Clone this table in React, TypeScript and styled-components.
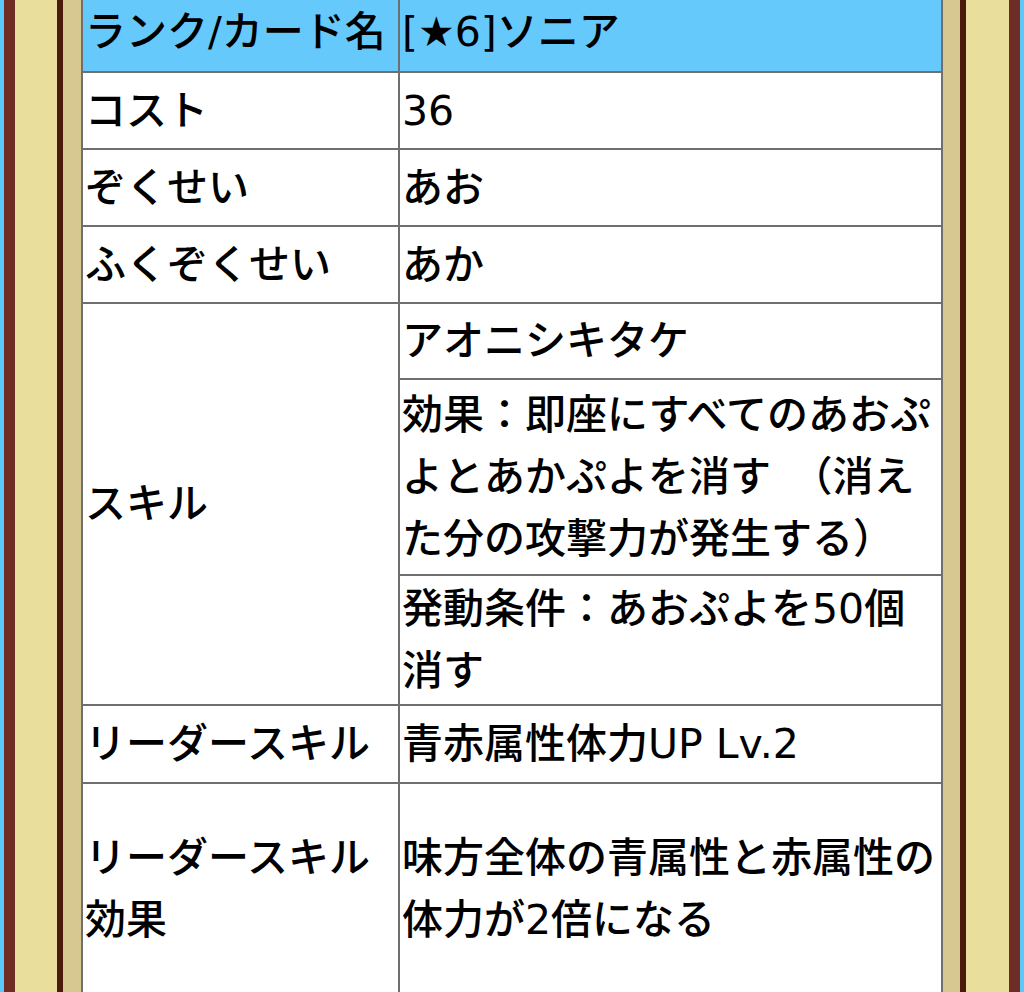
import React from "react";
import styled, { createGlobalStyle } from "styled-components";

const Global = createGlobalStyle`
  html, body {
    margin: 0;
    padding: 0;
    background: #5ac8f8;
  }
  body {
    font-family: "DejaVu Sans", "Noto Sans CJK JP", sans-serif;
  }
`;

const OuterFrame = styled.div`
  margin: 0 4px;
  min-height: 992px;
  background: #e9de9c;
  border-left: 11px solid #6e2c25;
  border-right: 11px solid #6e2c25;
  padding: 0 43px 0 42px;
`;

const InnerFrame = styled.div`
  min-height: 992px;
  background: #d6c890;
  border-left: 6px solid #4a1a0a;
  border-right: 6px solid #4a1a0a;
  padding: 0 17px 0 18px;
`;

const Table = styled.table`
  width: 100%;
  border-collapse: collapse;
  table-layout: fixed;
  background: #ffffff;
  color: #000000;
  font-family: "DejaVu Sans", "Noto Sans CJK JP", sans-serif;
  font-size: 41px;
  line-height: 62px;
  font-weight: 500;
`;

const Row = styled.tr<{ $h: number }>`
  height: ${(p) => p.$h}px;
`;

const Cell = styled.td<{ $head?: boolean }>`
  border: 2px solid #6f6f6f;
  border-top-width: ${(p) => (p.$head ? 0 : 2)}px;
  padding: ${(p) => (p.$head ? "0 2px 8px" : "0 2px")};
  vertical-align: middle;
  white-space: nowrap;
  overflow: hidden;
  background: ${(p) => (p.$head ? "#66c9fc" : "#ffffff")};
`;

export default function App() {
  return (
    <>
      <Global />
      <OuterFrame>
        <InnerFrame>
          <Table>
            <colgroup>
              <col style={{ width: 317 }} />
              <col />
            </colgroup>
            <tbody>
              <Row $h={72}>
                <Cell $head>ランク/カード名</Cell>
                <Cell $head>[★6]ソニア</Cell>
              </Row>
              <Row $h={77}>
                <Cell>コスト</Cell>
                <Cell>36</Cell>
              </Row>
              <Row $h={77}>
                <Cell>ぞくせい</Cell>
                <Cell>あお</Cell>
              </Row>
              <Row $h={77}>
                <Cell>ふくぞくせい</Cell>
                <Cell>あか</Cell>
              </Row>
              <Row $h={76}>
                <Cell rowSpan={3}>スキル</Cell>
                <Cell>アオニシキタケ</Cell>
              </Row>
              <Row $h={196}>
                <Cell>
                  効果：即座にすべてのあおぷ
                  <br />
                  よとあかぷよを消す　（消え
                  <br />
                  た分の攻撃力が発生する）
                </Cell>
              </Row>
              <Row $h={130}>
                <Cell>
                  発動条件：あおぷよを50個
                  <br />
                  消す
                </Cell>
              </Row>
              <Row $h={78}>
                <Cell>リーダースキル</Cell>
                <Cell>青赤属性体力UP Lv.2</Cell>
              </Row>
              <Row $h={211}>
                <Cell>
                  リーダースキル
                  <br />
                  効果
                </Cell>
                <Cell>
                  味方全体の青属性と赤属性の
                  <br />
                  体力が2倍になる
                </Cell>
              </Row>
            </tbody>
          </Table>
        </InnerFrame>
      </OuterFrame>
    </>
  );
}
